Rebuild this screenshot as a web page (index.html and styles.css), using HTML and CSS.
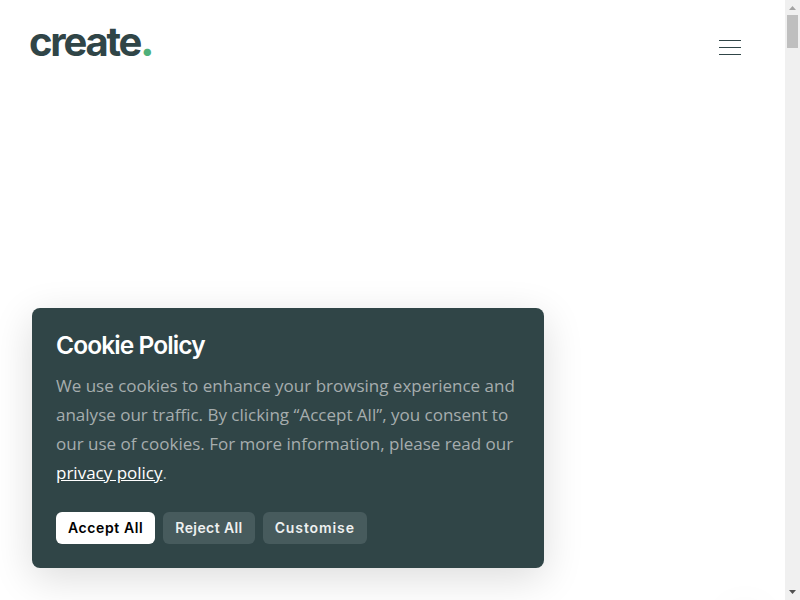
FILE: index.html
```html
<!DOCTYPE html>
<html lang="en">
<head>
<meta charset="utf-8">
<title>Create</title>
<link rel="stylesheet" href="styles.css">
</head>
<body>
<div class="app">
  <div class="viewport">
    <header class="site-header">
      <a class="logo" href="#">create<span class="logo-dot">.</span></a>
      <button class="menu" aria-label="Menu"><span></span><span></span><span></span></button>
    </header>
    <aside class="cookie">
      <h2 class="cookie-title">Cookie Policy</h2>
      <p class="cookie-text">We use cookies to enhance your browsing experience and analyse our traffic. By clicking “Accept All”, you consent to our use of cookies. For more information, please read our <a href="#">privacy policy</a>.</p>
      <div class="cookie-actions">
        <button class="btn btn-primary">Accept All</button>
        <button class="btn">Reject All</button>
        <button class="btn btn-wide">Customise</button>
      </div>
    </aside>
    <div class="widget"></div>
  </div>
  <div class="scrollbar" aria-hidden="true">
    <svg class="arrow" width="15" height="15" viewBox="0 0 15 15"><path d="M4 10h7L7.5 6z" fill="#a3a3a3"/></svg>
    <div class="track"><div class="thumb"></div></div>
    <svg class="arrow" width="15" height="15" viewBox="0 0 15 15"><path d="M4 5h7L7.5 9z" fill="#505050"/></svg>
  </div>
</div>
</body>
</html>
```
FILE: styles.css
```css
* { box-sizing: border-box; }
html, body { margin: 0; padding: 0; height: 100%; overflow: hidden; background: #fff; }
body { font-family: "Inter", "Liberation Sans", sans-serif; color: #304547; }
.app { display: flex; height: 100vh; }
.viewport { position: relative; flex: 1; min-width: 0; overflow: hidden; }
.site-header { display: flex; justify-content: space-between; align-items: flex-start; height: 94px; padding: 19px 44px 0 29px; }
.logo { font-family: "Inter", sans-serif; font-weight: 700; font-size: 40px; letter-spacing: -2.2px; color: #304547; text-decoration: none; line-height: 46px; }
.logo-dot { color: #4fb07a; font-weight: 800; }
.menu { display: flex; flex-direction: column; gap: 6px; width: 22px; margin-top: 21px; padding: 0; border: 0; background: none; }
.menu span { display: block; height: 1px; background: #304547; }
.cookie { position: absolute; left: 32px; bottom: 32px; width: 512px; height: 260px; padding: 24px; background: #304547; border-radius: 8px; box-shadow: 0 10px 40px rgba(0,0,0,.14); }
.cookie-title { margin: 0 0 13px; font-family: "Inter", sans-serif; font-size: 24.5px; line-height: 26px; font-weight: 600; letter-spacing: -0.9px; color: #fff; }
.cookie-text { margin: 0 0 25px; font-family: "Open Sans", sans-serif; font-size: 17px; line-height: 29px; color: #a6adae; }
.cookie-text a { color: #fff; }
.cookie-actions { display: flex; gap: 8px; }
.btn { height: 32px; padding: 0 12px 2px; border: 0; border-radius: 6px; background: #475b5d; color: #eef0f0; font-family: "Inter", sans-serif; font-size: 14px; font-weight: 600; letter-spacing: 0.4px; }
.btn-primary { background: #fff; color: #000; letter-spacing: 0.6px; }
.btn-wide { letter-spacing: 0.9px; }
.widget { position: absolute; right: 20px; bottom: -44px; width: 40px; height: 40px; border-radius: 50%; background: #fff; box-shadow: 0 0 40px rgba(0,0,0,.04); }
.scrollbar { display: flex; flex-direction: column; flex: none; width: 15px; background: #f0f0f0; }
.arrow { display: block; flex: none; }
.track { flex: 1; padding: 0 2px; }
.thumb { height: 33px; background: #bfbfbf; }
```
